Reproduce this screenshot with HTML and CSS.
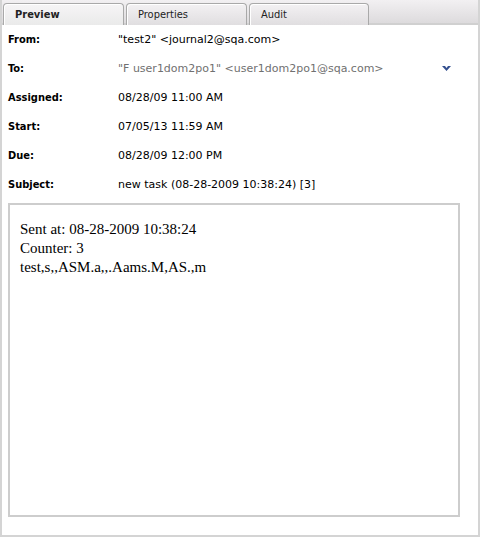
FILE: index.html
```html
<!DOCTYPE html>
<html>
<head>
<meta charset="utf-8">
<link rel="stylesheet" href="styles.css">
</head>
<body>
<div class="frame">
  <div class="tabbar">
    <div class="tab active">Preview</div>
    <div class="tab">Properties</div>
    <div class="tab narrow">Audit</div>
  </div>
  <div class="content">
    <div class="row"><div class="label">From:</div><div class="value">"test2" &lt;journal2@sqa.com&gt;</div></div>
    <div class="row"><div class="label">To:</div><div class="value gray">"F user1dom2po1" &lt;user1dom2po1@sqa.com&gt;</div>
      <svg class="chev" width="9" height="6" viewBox="0 0 9 6"><path d="M0 0h3l1.5 2L6 0h3L4.5 5z" fill="#34508f"/></svg>
    </div>
    <div class="row"><div class="label">Assigned:</div><div class="value">08/28/09 11:00 AM</div></div>
    <div class="row"><div class="label">Start:</div><div class="value">07/05/13 11:59 AM</div></div>
    <div class="row"><div class="label">Due:</div><div class="value">08/28/09 12:00 PM</div></div>
    <div class="row"><div class="label">Subject:</div><div class="value">new task (08-28-2009 10:38:24) [3]</div></div>
    <div class="body">
      <div>Sent at: 08-28-2009 10:38:24</div>
      <div>Counter: 3</div>
      <div>test,s,,ASM.a,,.Aams.M,AS.,m</div>
    </div>
  </div>
</div>
</body>
</html>
```

FILE: styles.css
```css
html, body { margin: 0; padding: 0; background: #fff; }
.frame {
  width: 476px;
  height: 535px;
  border-left: 2px solid #d4d4d4;
  border-right: 2px solid #d4d4d4;
  border-bottom: 2px solid #d4d4d4;
  display: flex;
  flex-direction: column;
  font-family: "DejaVu Sans Condensed", "DejaVu Sans", sans-serif;
  font-size: 11px;
  color: #000;
}
.tabbar {
  height: 25px;
  padding: 3px 0 0 1px;
  box-sizing: border-box;
  background: linear-gradient(#f2f0f2, #dddbdd);
  border-bottom: 2px solid #d0d0d0;
  display: flex;
  gap: 2px;
  flex: none;
}
.tab {
  width: 121px;
  height: 22px;
  box-sizing: border-box;
  border: 1px solid #a9a9a9;
  border-bottom: none;
  border-radius: 4px 4px 0 0;
  padding: 4px 0 0 11px;
  background: linear-gradient(#f3f1f3, #e0dee0);
  color: #222;
  box-shadow: inset 1px 1px 0 #fff;
}
.tab.narrow { width: 120px; }
.tab.active {
  font-weight: bold;
  background: linear-gradient(#f6f5f6, #eaeaea);
}
.content {
  flex: 1;
  padding: 0 18px 18px 6px;
  display: flex;
  flex-direction: column;
}
.row {
  height: 29px;
  display: flex;
  align-items: center;
  flex: none;
}
.label {
  width: 110px;
  font-weight: bold;
}
.value {
  flex: 1;
  font-family: "DejaVu Sans", sans-serif;
}
.gray { color: #707070; }
.chev {
  margin-right: 9px;
}
.body {
  margin-top: 4px;
  flex: 1;
  border: 2px solid #cdcdcd;
  padding: 15px 10px;
  font-family: "Liberation Serif", serif;
  font-size: 15px;
  line-height: 19px;
}
```
